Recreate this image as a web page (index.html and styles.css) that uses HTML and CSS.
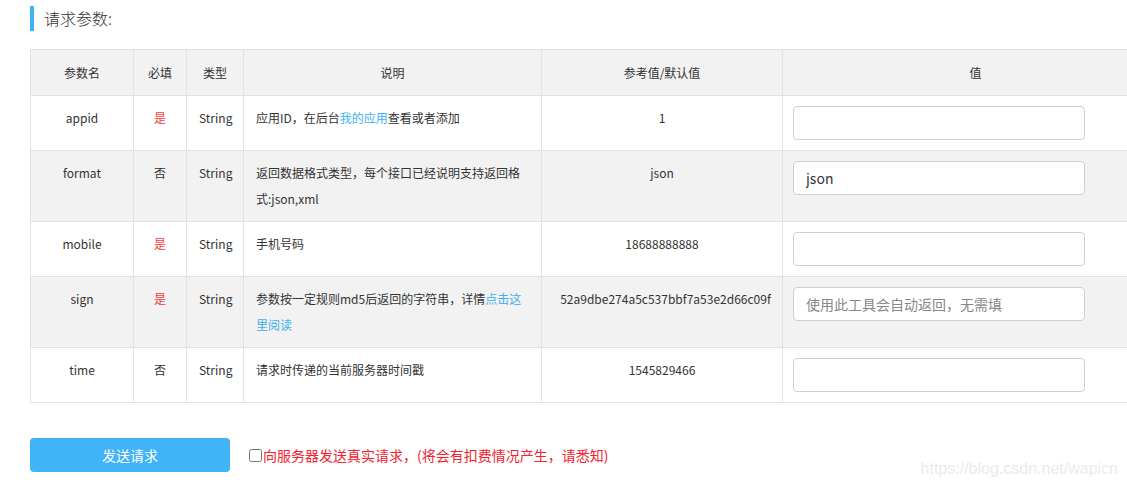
FILE: index.html
```html
<!DOCTYPE html>
<html lang="zh-CN">
<head>
    <meta charset="UTF-8">
    <meta name="viewport" content="width=device-width, initial-scale=1.0">
    <title>请求参数</title>
    <link rel="stylesheet" href="styles.css">
</head>
<body>
    <div class="page">
        <h3 class="title">请求参数:</h3>
        <table class="params">
            <colgroup>
                <col class="c-name">
                <col class="c-req">
                <col class="c-type">
                <col class="c-desc">
                <col class="c-ref">
                <col class="c-val">
            </colgroup>
            <thead>
                <tr>
                    <th>参数名</th>
                    <th>必填</th>
                    <th>类型</th>
                    <th>说明</th>
                    <th>参考值/默认值</th>
                    <th>值</th>
                </tr>
            </thead>
            <tbody>
                <tr>
                    <td>appid</td>
                    <td class="must">是</td>
                    <td>String</td>
                    <td class="desc">应用ID，在后台<a href="#">我的应用</a>查看或者添加</td>
                    <td>1</td>
                    <td class="val"><input type="text" id="appid"></td>
                </tr>
                <tr class="alt">
                    <td>format</td>
                    <td>否</td>
                    <td>String</td>
                    <td class="desc">返回数据格式类型，每个接口已经说明支持返回格式:json,xml</td>
                    <td>json</td>
                    <td class="val"><input type="text" id="format" value="json"></td>
                </tr>
                <tr>
                    <td>mobile</td>
                    <td class="must">是</td>
                    <td>String</td>
                    <td class="desc">手机号码</td>
                    <td>18688888888</td>
                    <td class="val"><input type="text" id="mobile"></td>
                </tr>
                <tr class="alt">
                    <td>sign</td>
                    <td class="must">是</td>
                    <td>String</td>
                    <td class="desc">参数按一定规则md5后返回的字符串，详情<a href="#">点击这里阅读</a></td>
                    <td class="hash">52a9dbe274a5c537bbf7a53e2d66c09f</td>
                    <td class="val"><input type="text" id="sign" placeholder="使用此工具会自动返回，无需填"></td>
                </tr>
                <tr>
                    <td>time</td>
                    <td>否</td>
                    <td>String</td>
                    <td class="desc">请求时传递的当前服务器时间戳</td>
                    <td>1545829466</td>
                    <td class="val"><input type="text" id="time"></td>
                </tr>
            </tbody>
        </table>

        <div class="actions">
            <button class="send">发送请求</button>
            <label class="real"><input type="checkbox" id="real">向服务器发送真实请求，(将会有扣费情况产生，请悉知)</label>
        </div>
    </div>
    <div class="watermark">https://blog.csdn.net/wapicn</div>
</body>
</html>
```

FILE: styles.css
```css
html, body { overflow: hidden; }
body { margin: 0; font-family: "Noto Sans CJK SC", "Noto Sans", sans-serif; color: #333; background: #fff; }
.page { padding: 6px 0 0 30px; }

.title { margin: 0; height: 25px; line-height: 25px; border-left: 4px solid #3fb3f3; padding-left: 10px; font-size: 16px; font-weight: 300; color: #333; }

.params { margin-top: 18px; width: 1138px; border-collapse: collapse; table-layout: fixed; font-size: 12px; }
.c-name { width: 103px; }
.c-req { width: 53px; }
.c-type { width: 57px; }
.c-desc { width: 298px; }
.c-ref { width: 241px; }
.c-val { width: 386px; }
.params th, .params td { border: 1px solid #e2e2e2; padding: 9px 12px; line-height: 26px; text-align: center; vertical-align: top; }
.params th { background: #f2f2f2; font-weight: normal; vertical-align: middle; padding: 10px 12px 9px; }
.params tr.alt td { background: #f2f2f2; }
.params td.desc { text-align: left; }
.params td.must { color: #f23c3c; }
.params td.hash { padding-left: 11px; padding-right: 4px; }
.params td.val { text-align: left; padding-left: 10px; }
.params a { color: #3cb0f2; text-decoration: none; }
.params input { display: block; width: 292px; height: 34px; margin: 1px 0; box-sizing: border-box; padding: 0 12px; border: 1px solid #ccd0d6; border-radius: 4px; background: #fff; font-family: inherit; font-size: 14px; color: #333; }
.params input::placeholder { color: #888; font-size: 14px; }

.actions { display: flex; align-items: center; margin-top: 35px; }
.send { width: 200px; height: 34px; background: #40b4f6; color: #fff; border: none; border-radius: 4px; font-family: inherit; font-size: 14px; cursor: pointer; }
.real { margin-left: 18px; display: flex; align-items: center; color: #f2222e; font-size: 14px; }
.real input { margin: 0 1px 0 1px; width: 13px; height: 13px; }

.watermark { position: absolute; right: 9px; bottom: 11px; font-family: "Liberation Sans", Arial, sans-serif; font-size: 16px; color: #ebebeb; }
```
